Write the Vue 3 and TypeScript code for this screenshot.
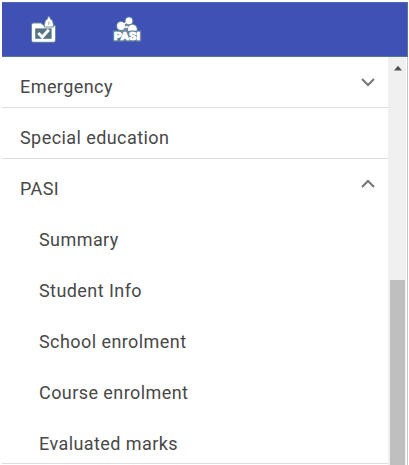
<script setup lang="ts">
interface Section {
  label: string
  expanded?: boolean
  children?: string[]
}

const sections: Section[] = [
  { label: 'Emergency', expanded: false },
  { label: 'Special education' },
  {
    label: 'PASI',
    expanded: true,
    children: ['Summary', 'Student Info', 'School enrolment', 'Course enrolment', 'Evaluated marks'],
  },
]
</script>

<template>
  <div class="panel">
    <header class="toolbar">
      <svg class="icon" width="32" height="32" viewBox="0 0 32 32">
        <g fill="#ffffff" stroke="#68899a" stroke-width="2" stroke-linejoin="round" paint-order="stroke">
          <path d="M5.5 7.4H13L15 9.6H25.5a1.5 1.5 0 0 1 1.5 1.5V24.2a1.5 1.5 0 0 1-1.5 1.5H5.5A1.5 1.5 0 0 1 4 24.2V8.9a1.5 1.5 0 0 1 1.5-1.5z" />
          <path d="M20.8 .6l1.3 2.6 1.9 1.6 .9 3.4v2.2h-8V8.2l1-3.4 1.8-1.6z" />
        </g>
        <path d="M20.9 5.8v3" stroke="#91a2ae" stroke-width="1" />
        <rect x="7.2" y="12.4" width="16.4" height="10.4" fill="#557584" />
        <path d="M10.3 17l4 4 6.6-7.2" fill="none" stroke="#ffffff" stroke-width="3" />
      </svg>
      <svg class="icon pasi" width="34" height="32" viewBox="0 0 34 32">
        <g fill="#ffffff" stroke="#67869b" stroke-width="2" paint-order="stroke">
          <path d="M8 12l8-7h4l6 9v3H8z" stroke="none" fill="#7890ac" />
          <circle cx="18" cy="4.9" r="3.3" />
          <circle cx="10" cy="10" r="3.9" />
          <path d="M17 14.8v-1.6a4.4 4.4 0 0 1 8.8 0v1.6z" />
          <path d="M13 8l3-2M13 11h4.5" stroke="#ffffff" stroke-width="1.5" />
          <text class="halo" x="3" y="23.5" textLength="26" lengthAdjust="spacingAndGlyphs">PASI</text>
          <text class="face" x="3" y="23.5" textLength="26" lengthAdjust="spacingAndGlyphs">PASI</text>
        </g>
      </svg>
    </header>

    <div class="body">
      <nav class="list">
        <section v-for="section in sections" :key="section.label" class="section">
          <div class="row">
            <span>{{ section.label }}</span>
            <svg
              v-if="section.expanded !== undefined"
              :class="['chevron', { up: section.expanded }]"
              width="16"
              height="10"
              viewBox="0 0 16 10"
            >
              <path d="M2 2l6 6 6-6" />
            </svg>
          </div>
          <div v-for="child in section.children" :key="child" class="row child">{{ child }}</div>
        </section>
      </nav>
      <div class="scrollbar">
        <svg class="arrow" width="10" height="6" viewBox="0 0 10 6"><path d="M1 5.5L5 .8l4 4.7z" /></svg>
        <div class="thumb"></div>
      </div>
    </div>
  </div>
</template>

<style>
body {
  background: #ffffff;
}
</style>

<style scoped>
.panel {
  box-sizing: border-box;
  width: 409px;
  height: 465px;
  padding: 2px 1px 0 2px;
  overflow: hidden;
  font-family: Roboto, sans-serif;
  font-size: 18px;
  letter-spacing: 0.43px;
  color: #484848;
}
.toolbar {
  box-sizing: border-box;
  display: flex;
  height: 55px;
  padding: 13px 0 0 26px;
  background: #3f51b5;
  border: 1px solid #58758f;
  border-width: 1px 1px 1px 0;
  border-top-color: #5265b5;
}
.icon {
  display: block;
}
.pasi {
  margin-left: 51px;
}
.pasi text {
  font-family: Roboto, sans-serif;
  font-size: 11px;
  font-weight: 900;
  letter-spacing: 0;
}
.pasi .halo {
  stroke-width: 3px;
}
.pasi .face {
  stroke: #ffffff;
  stroke-width: 0.6px;
}
.body {
  display: flex;
  height: 408px;
  border-right: 1px solid #c7c7c7;
}
.list {
  flex: 1;
}
.section {
  box-sizing: border-box;
  border-bottom: 1px solid #dedede;
}
.row {
  box-sizing: border-box;
  display: flex;
  align-items: center;
  justify-content: space-between;
  height: 50px;
  padding: 9px 12px 0 18px;
  line-height: 24px;
}
.row.child {
  height: 51px;
  padding: 10px 12px 0 37px;
}
.row.child:last-child {
  height: 50px;
  padding-top: 11px;
}
.chevron {
  margin-top: -9px;
  fill: none;
  stroke: #757575;
  stroke-width: 2;
}
.chevron.up {
  transform: rotate(180deg);
}
.scrollbar {
  box-sizing: border-box;
  display: flex;
  flex-direction: column;
  align-items: center;
  width: 19px;
  padding: 8px 2px 0;
  background: linear-gradient(to right, #f0f0f0 18px, #ffffff 18px);
}
.arrow {
  fill: #505050;
}
.thumb {
  width: 15px;
  flex: 1;
  margin-top: 209px;
  background: #bfbfbf;
}
</style>
